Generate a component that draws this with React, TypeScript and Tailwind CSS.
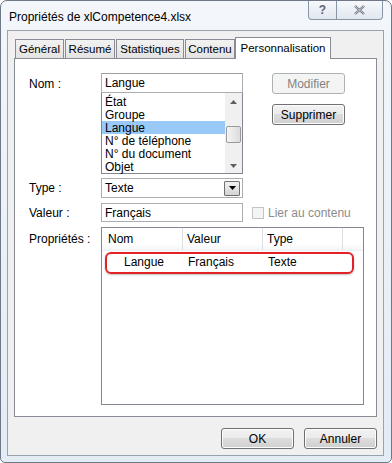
import React from 'react'

const items = ['État', 'Groupe', 'Langue', 'N° de téléphone', 'N° du document', 'Objet']

function WinButton({ label, disabled }: { label: string; disabled?: boolean }) {
  if (disabled) {
    return (
      <div className="flex h-[21px] w-[73px] items-center justify-center rounded-[3px] border border-[#adb2b5] bg-[#f4f4f4] text-[#838383]">
        {label}
      </div>
    )
  }
  return (
    <div className="flex h-[21px] w-[73px] items-center justify-center rounded-[3px] border border-[#707070] bg-[linear-gradient(to_bottom,#f2f2f2_0%,#ebebeb_50%,#dddddd_50%,#cfcfcf_100%)] shadow-[inset_0_0_0_1px_#fcfcfc]">
      {label}
    </div>
  )
}

function Arrow({ dir }: { dir: 'up' | 'down' }) {
  return (
    <svg width="7" height="4" viewBox="0 0 7 4">
      {dir === 'up' ? <path d="M0 4 L3.5 0 L7 4 Z" fill="#606060" /> : <path d="M0 0 L3.5 4 L7 0 Z" fill="#606060" />}
    </svg>
  )
}

export default function App() {
  return (
    <div className="h-[463px] w-[392px] bg-white font-['Liberation_Sans',Arial,sans-serif] text-[12px] leading-none text-black">
      <div className="flex h-full flex-col rounded-t-[7px] rounded-b-[5px] border border-[#6e7886] bg-[linear-gradient(to_bottom,#f3f7fb,#e3ebf5)] pb-[6px] pl-[6px] pr-[7px]">
        {/* title bar */}
        <div className="flex h-[29px] items-start">
          <div className="pl-[2px] pt-[10px] text-[12px] text-black">Propriétés de xlCompetence4.xlsx</div>
          <div className="ml-auto mr-[1px] flex">
            <div className="flex h-[19px] w-[29px] items-center justify-center rounded-bl-[4px] border border-t-0 border-[#8a96a4] bg-[linear-gradient(to_bottom,#f6f8fb,#e2e8f0)] text-[12px] font-bold text-[#5c6470]">
              ?
            </div>
            <div className="flex h-[19px] w-[46px] items-center justify-center rounded-br-[4px] border border-t-0 border-l-0 border-[#8a96a4] bg-[linear-gradient(to_bottom,#f6f8fb,#e2e8f0)]">
              <svg width="11" height="10" viewBox="0 0 11 10">
                <path d="M1 1 L10 9 M10 1 L1 9" stroke="#5c6470" strokeWidth="2.2" fill="none" />
                <path d="M1 1 L10 9 M10 1 L1 9" stroke="#eef1f5" strokeWidth="0.8" fill="none" />
              </svg>
            </div>
          </div>
        </div>

        {/* client area */}
        <div className="flex flex-1 flex-col border border-[#9aa3ad] bg-[#f0f0f0] px-[6px] pt-[5px]">
          {/* tabs */}
          <div className="flex h-[22px] items-end pl-[1px] text-[11.5px]">
            {[
              ['Général', 'w-[49px]'],
              ['Résumé', 'w-[50px]'],
              ['Statistiques', 'w-[68px]'],
              ['Contenu', 'w-[50px]'],
            ].map(([t, w]) => (
              <div
                key={t}
                className={`mr-[1px] flex h-[19px] ${w} items-center justify-center border border-b-0 border-[#898c95] bg-[linear-gradient(to_bottom,#f2f2f2,#e3e3e3)] pt-[1px]`}
              >
                {t}
              </div>
            ))}
            <div className="relative z-10 -mb-px -ml-[1px] flex h-[22px] w-[96px] items-start justify-center border border-b-0 border-[#898c95] bg-white pt-[5px]">
              Personnalisation
            </div>
          </div>

          {/* panel */}
          <div className="h-[359px] border border-[#898c95] bg-white pl-[14px] pr-[12px] pt-[14px]">
            <div className="flex">
              <div className="w-[72px] pt-[5px]">Nom :</div>
              <div className="w-[142px]">
                <div className="flex h-[20px] items-center border border-[#abadb3] border-t-[#a0a0a0] pl-[3px]">Langue</div>
                <div className="flex h-[81px] border border-t-0 border-[#828790]">
                  <div className="flex-1 pt-[2px]">
                    {items.map((it) => (
                      <div key={it} className={`flex h-[13px] items-center pl-[3px] ${it === 'Langue' ? 'bg-[#99c9f7]' : ''}`}>
                        {it}
                      </div>
                    ))}
                  </div>
                  <div className="flex w-[17px] flex-col bg-[#f0f0f0]">
                    <div className="flex h-[17px] items-center justify-center">
                      <Arrow dir="up" />
                    </div>
                    <div className="flex-1 pt-[16px]">
                      <div className="mx-[1px] h-[17px] rounded-[2px] border border-[#9a9a9a] bg-[linear-gradient(to_right,#f4f4f4,#dcdcdc)]" />
                    </div>
                    <div className="flex h-[15px] items-center justify-center">
                      <Arrow dir="down" />
                    </div>
                  </div>
                </div>
              </div>
              <div className="ml-[29px] flex flex-col gap-[10px]">
                <WinButton label="Modifier" disabled />
                <WinButton label="Supprimer" />
              </div>
            </div>

            <div className="mt-[4px] flex items-center">
              <div className="w-[72px]">Type :</div>
              <div className="flex h-[20px] w-[142px] items-center justify-between border border-[#abadb3] pl-[3px] pr-[2px]">
                <span>Texte</span>
                <div className="flex h-[15px] w-[16px] items-center justify-center rounded-[1px] border border-[#707070] bg-[linear-gradient(to_bottom,#f2f2f2,#d4d4d4)]">
                  <svg width="7" height="4" viewBox="0 0 7 4">
                    <path d="M0 0 L3.5 4 L7 0 Z" fill="#000" />
                  </svg>
                </div>
              </div>
            </div>

            <div className="mt-[5px] flex items-center">
              <div className="w-[72px]">Valeur :</div>
              <div className="flex h-[19px] w-[142px] items-center border border-[#abadb3] pl-[3px]">Français</div>
              <div className="ml-[9px] h-[12px] w-[12px] border border-[#c4c4c4] bg-[#f4f4f4]" />
              <div className="ml-[4px] text-[#8b8b8b]">Lier au contenu</div>
            </div>

            <div className="mt-[5px] flex">
              <div className="w-[72px] pt-[6px]">Propriétés :</div>
              <div className="relative h-[178px] w-[263px] border border-[#828790]">
                <div className="flex h-[23px] items-center border-b border-[#eef0f3] bg-[linear-gradient(to_bottom,#ffffff_70%,#f4f6f8)]">
                  <div className="flex h-full w-[81px] items-center border-r border-[#dedfe2] pl-[6px]">Nom</div>
                  <div className="flex h-full w-[80px] items-center border-r border-[#dedfe2] pl-[4px]">Valeur</div>
                  <div className="flex h-full w-[80px] items-center border-r border-[#dedfe2] pl-[4px]">Type</div>
                </div>
                <div className="flex h-[22px] items-center">
                  <div className="w-[81px] pl-[22px]">Langue</div>
                  <div className="w-[80px] pl-[5px]">Français</div>
                  <div className="w-[80px] pl-[5px]">Texte</div>
                </div>
                <div className="pointer-events-none absolute left-[3px] top-[24px] h-[22px] w-[249px] rounded-[6px] border-2 border-[#e32228] shadow-[0_1px_2px_rgba(0,0,0,0.25)]" />
              </div>
            </div>
          </div>

          {/* buttons */}
          <div className="flex justify-end gap-[10px] pt-[11px]">
            <WinButton label="OK" />
            <WinButton label="Annuler" />
          </div>
        </div>
      </div>
    </div>
  )
}
